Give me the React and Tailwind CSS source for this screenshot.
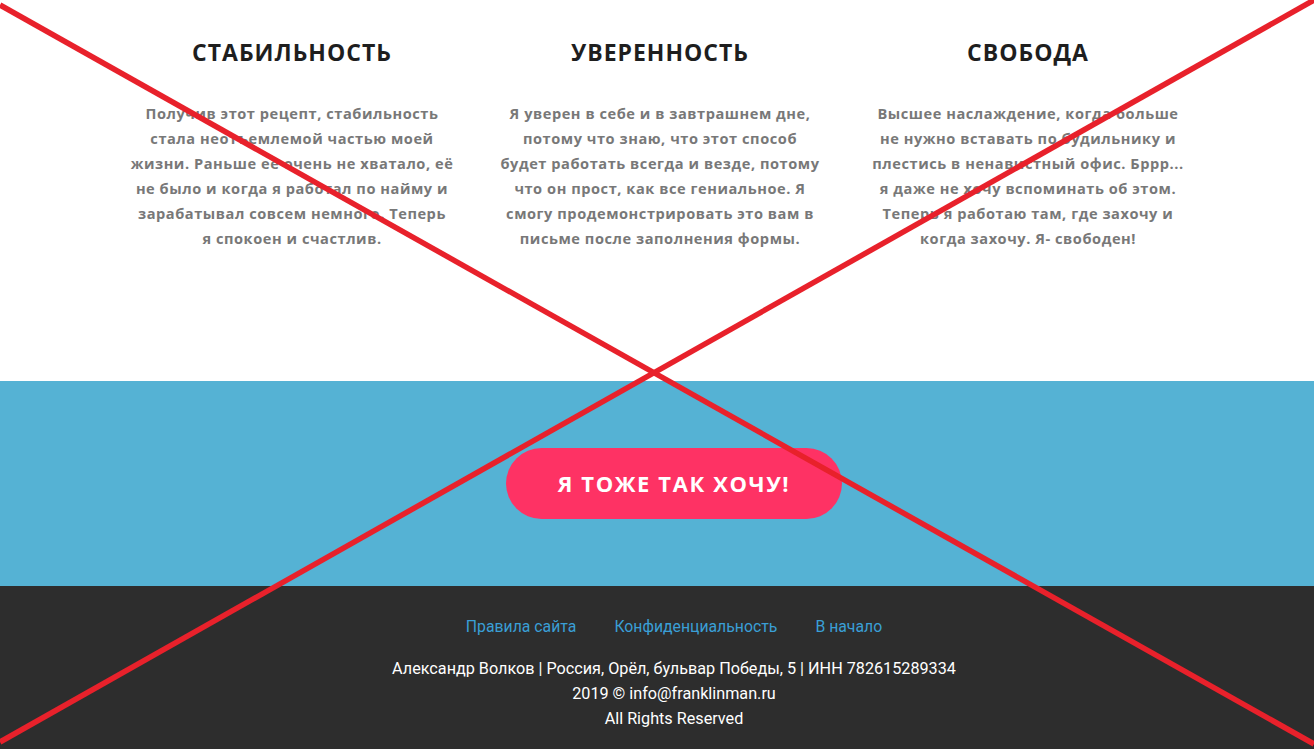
const FEATURES = [
  {
    title: 'СТАБИЛЬНОСТЬ',
    lines: [
      'Получив этот рецепт, стабильность',
      'стала неотъемлемой частью моей',
      'жизни. Раньше её очень не хватало, её',
      'не было и когда я работал по найму и',
      'зарабатывал совсем немного. Теперь',
      'я спокоен и счастлив.',
    ],
  },
  {
    title: 'УВЕРЕННОСТЬ',
    lines: [
      'Я уверен в себе и в завтрашнем дне,',
      'потому что знаю, что этот способ',
      'будет работать всегда и везде, потому',
      'что он прост, как все гениальное. Я',
      'смогу продемонстрировать это вам в',
      'письме после заполнения формы.',
    ],
  },
  {
    title: 'СВОБОДА',
    lines: [
      'Высшее наслаждение, когда больше',
      'не нужно вставать по будильнику и',
      'плестись в ненавистный офис. Бррр...',
      'я даже не хочу вспоминать об этом.',
      'Теперь я работаю там, где захочу и',
      'когда захочу. Я- свободен!',
    ],
  },
]

export default function App() {
  return (
    <div className="relative w-full overflow-hidden font-['Roboto','Noto_Sans',sans-serif]">
      {/* Features */}
      <section className="bg-white h-[381px] pt-[35px]">
        <div className="mx-auto w-[1110px] pl-[6px] grid grid-cols-3 font-['Open_Sans','Noto_Sans',sans-serif]">
          {FEATURES.map((f) => (
            <div key={f.title} className="flex flex-col items-center text-center">
              <h2 className="text-[23px] leading-[34px] font-bold text-[#1e1e1e] tracking-[1px]">{f.title}</h2>
              <p className="mt-[32px] text-[14.6px] leading-[25px] font-bold text-[#787878] tracking-[0.55px]">
                {f.lines.map((l) => (
                  <span key={l} className="block whitespace-nowrap">{l}</span>
                ))}
              </p>
            </div>
          ))}
        </div>
      </section>

      {/* CTA */}
      <section className="bg-[#55b2d4] h-[205px] flex items-center justify-center pl-[34px]">
        <button className="w-[336px] h-[71px] rounded-full bg-[#fe3264] text-white text-[22px] font-bold tracking-[1.6px] uppercase font-['Open_Sans','Noto_Sans',sans-serif]">
          Я тоже так хочу!
        </button>
      </section>

      {/* Footer */}
      <footer className="bg-[#2d2d2d] h-[163px] pt-[30px] pl-[34px] text-center">
        <nav className="flex justify-center gap-[38px] text-[15.8px] leading-[22px] text-[#3a9fd6]">
          <a href="#">Правила сайта</a>
          <a href="#">Конфиденциальность</a>
          <a href="#">В начало</a>
        </nav>
        <div className="mt-[18px] text-[16.2px] leading-[25px] text-white">
          <div>Александр Волков | Россия, Орёл, бульвар Победы, 5 | ИНН 782615289334</div>
          <div>2019 © info@franklinman.ru</div>
          <div>All Rights Reserved</div>
        </div>
      </footer>

      {/* Red cross overlay */}
      <svg className="absolute inset-0 w-full h-full pointer-events-none" viewBox="0 0 1314 749" preserveAspectRatio="none">
        <line x1="0" y1="5" x2="1314" y2="744" stroke="#e8212b" strokeWidth="5.5" />
        <line x1="1314" y1="0" x2="0" y2="742" stroke="#e8212b" strokeWidth="5.5" />
      </svg>
    </div>
  )
}
